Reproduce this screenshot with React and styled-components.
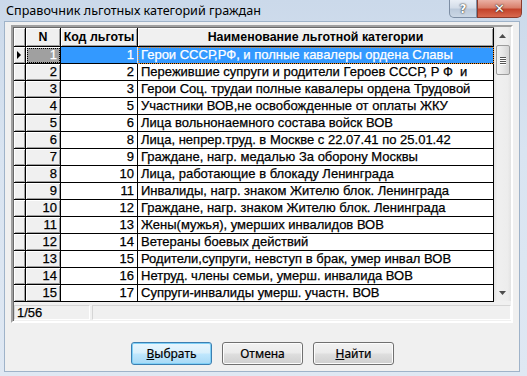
import styled, { createGlobalStyle } from "styled-components";

const GlobalStyle = createGlobalStyle`
  html, body { margin: 0; padding: 0; background: #d6e2ef; }
  body { width: 527px; height: 376px; overflow: hidden; }
`;

const rows = [
  [1, 1, "Герои СССР,РФ, и полные кавалеры ордена Славы"],
  [2, 2, "Пережившие супруги и родители Героев СССР, Р Ф  и"],
  [3, 3, "Герои Соц. трудаи полные кавалеры ордена Трудовой"],
  [4, 5, "Участники ВОВ,не освобожденные от оплаты ЖКУ"],
  [5, 6, "Лица вольнонаемного состава войск ВОВ"],
  [6, 8, "Лица, непрер.труд. в Москве с 22.07.41 по 25.01.42"],
  [7, 9, "Граждане, нагр. медалью За оборону Москвы"],
  [8, 10, "Лица, работающие в блокаду Ленинграда"],
  [9, 11, "Инвалиды, нагр. знаком Жителю блок. Ленинграда"],
  [10, 12, "Граждане, нагр. знаком Жителю блок. Ленинграда"],
  [11, 13, "Жены(мужья), умерших инвалидов ВОВ"],
  [12, 14, "Ветераны боевых действий"],
  [13, 15, "Родители,супруги, невступ в брак, умер инвал ВОВ"],
  [14, 16, "Нетруд. члены семьи, умерш. инвалида ВОВ"],
  [15, 17, "Супруги-инвалиды умерш. участн. ВОВ"],
];

const Window = styled.div`
  width: 527px;
  height: 376px;
  display: flex;
  flex-direction: column;
  background: linear-gradient(180deg, #cbd9ea 0%, #d9e4f1 40%, #dfe8f3 100%);
  box-sizing: border-box;
  padding: 0 7px 4px 4px;
`;

const TitleBar = styled.div`
  height: 21px;
  display: flex;
  align-items: flex-start;
  justify-content: space-between;
`;

const Title = styled.div`
  font-family: "Noto Sans", "Open Sans", sans-serif;
  font-size: 12.6px;
  color: #000;
  padding: 3px 0 0 2px;
  line-height: 16px;
`;

const Caption = styled.div`
  display: flex;
  margin-right: -2px;
`;

const CapButton = styled.div`
  height: 18px;
  width: ${(p) => p.$w}px;
  box-sizing: border-box;
  display: flex;
  align-items: center;
  justify-content: center;
  border: 1px solid ${(p) => (p.$close ? "#8a3a2c" : "#7d8ea4")};
  border-top: none;
  border-radius: ${(p) => (p.$close ? "0 0 5px 0" : "0 0 0 5px")};
  background: ${(p) =>
    p.$close
      ? "linear-gradient(180deg, #eab0a4 0%, #d9806c 45%, #c3432b 55%, #d8694f 100%)"
      : "linear-gradient(180deg, #e9eef5 0%, #d4dde9 45%, #bccadb 55%, #cbd7e5 100%)"};
  font-family: "DejaVu Sans", sans-serif;
  font-weight: bold;
  font-size: ${(p) => (p.$close ? 13 : 12)}px;
  color: #fff;
  text-shadow: 0 0 2px #333, 0 0 1px #222;
`;

const Client = styled.div`
  flex: 1;
  background: #f0f0f0;
  border: 1px solid #9fb3c9;
  display: flex;
  flex-direction: column;
  padding: 3px 6px 6px 6px;
`;

const GridFrame = styled.div`
  border-style: solid;
  border-width: 2px;
  border-color: #a0a0a0 #fff #fff #a0a0a0;
  box-shadow: inset 1px 1px 0 #696969;
  display: flex;
  flex-direction: column;
  background: #f0f0f0;
`;

const GridBody = styled.div`
  display: flex;
  padding: 1px 0 0 1px;
`;

const Table = styled.div`
  width: 480px;
  font-family: "Liberation Sans", Arial, sans-serif;
`;

const Row = styled.div`
  display: grid;
  grid-template-columns: 12px 35px 77px 356px;
  height: ${(p) => (p.$head ? 19 : 17)}px;
`;

const GrayCell = styled.div`
  background: ${(p) => (p.$current ? "#a0a0a0" : "#f0f0f0")};
  box-shadow: inset 1px 1px 0 #fff, inset -1px -1px 0 #a0a0a0;
  border-right: 1px solid #000;
  border-bottom: 1px solid #000;
  font-size: 13px;
  line-height: 16px;
  -webkit-text-stroke: 0.25px currentColor;
  text-align: right;
  padding-right: 3px;
  color: ${(p) => (p.$current ? "#fff" : "#000")};
  outline: ${(p) => (p.$current ? "1px dotted #000" : "none")};
  outline-offset: -2px;
  display: flex;
  align-items: center;
  justify-content: flex-end;
`;

const Indicator = styled(GrayCell)`
  padding: 0;
  justify-content: center;
`;

const HeadCell = styled.div`
  background: #f0f0f0;
  box-shadow: inset 1px 1px 0 #fff, inset -1px -1px 0 #a0a0a0;
  border-right: 1px solid #000;
  border-bottom: 1px solid #000;
  font-weight: bold;
  font-size: 12.4px;
  display: flex;
  align-items: center;
  justify-content: center;
  color: #000;
`;

const Cell = styled.div`
  background: ${(p) => (p.$sel ? "#3399ff" : "#fff")};
  color: ${(p) => (p.$sel ? "#fff" : "#000")};
  border-right: 1px solid ${(p) => (p.$sel && p.$num ? "#cfe4ff" : "#000")};
  border-bottom: 1px solid #000;
  font-size: 13px;
  line-height: 16px;
  -webkit-text-stroke: 0.25px currentColor;
  white-space: pre;
  overflow: hidden;
  text-align: ${(p) => (p.$num ? "right" : "left")};
  padding: ${(p) => (p.$num ? "0 3px 0 0" : "0 0 0 3px")};
  outline: ${(p) => (p.$focus ? "1px dotted #f08a24" : "none")};
  outline-offset: -1px;
`;

const Scrollbar = styled.div`
  width: 17px;
  height: 274px;
  margin-top: -1px;
  background: linear-gradient(90deg, #e3e3e3 0%, #f0f0f0 20%, #ededed 80%, #e3e3e3 100%);
  display: flex;
  flex-direction: column;
  align-items: center;
`;

const Arrow = styled.div`
  height: 17px;
  width: 17px;
  display: flex;
  align-items: center;
  justify-content: center;
`;

const Thumb = styled.div`
  width: 14px;
  height: 30px;
  margin-top: 1px;
  box-sizing: border-box;
  border: 1px solid #9c9c9c;
  border-radius: 2px;
  background: linear-gradient(90deg, #f3f3f3 0%, #e6e6e6 50%, #d4d4d4 100%);
  display: flex;
  flex-direction: column;
  align-items: center;
  justify-content: center;
  gap: 1px;
`;

const Grip = styled.div`
  width: 6px;
  height: 1px;
  background: #555;
  box-shadow: 0 1px 0 #fff;
`;

const Track = styled.div`
  flex: 1;
`;

const StatusStrip = styled.div`
  display: flex;
  gap: 2px;
  padding: 3px 0 1px 1px;
`;

const StatusBox = styled.div`
  width: ${(p) => p.$w}px;
  flex: ${(p) => (p.$w ? "none" : 1)};
  height: 15px;
  box-sizing: border-box;
  border: 1px solid #d5d5d5;
  border-right-color: #fff;
  border-bottom-color: #fff;
  background: #f0f0f0;
  font-family: "Liberation Sans", Arial, sans-serif;
  font-size: 13px;
  line-height: 14px;
  -webkit-text-stroke: 0.25px currentColor;
  padding-left: 2px;
`;

const Buttons = styled.div`
  flex: 1;
  display: flex;
  justify-content: center;
  align-items: flex-end;
  gap: 10px;
  padding-left: 1px;
`;

const Button = styled.div`
  width: 81px;
  height: 23px;
  box-sizing: border-box;
  border: 1px solid ${(p) => (p.$default ? "#3c7fb1" : "#707070")};
  border-radius: 3px;
  background: ${(p) =>
    p.$default
      ? "linear-gradient(180deg, #eaf6fd 0%, #d9f0fc 45%, #bee6fd 55%, #a7d9f5 100%)"
      : "linear-gradient(180deg, #f2f2f2 0%, #ebebeb 45%, #dddddd 55%, #cfcfcf 100%)"};
  box-shadow: inset 0 0 0 1px ${(p) => (p.$default ? "#7fd0f7" : "#fcfcfc")};
  font-family: "Noto Sans", "Open Sans", sans-serif;
  font-size: 12px;
  -webkit-text-stroke: 0.2px currentColor;
  color: #000;
  display: flex;
  align-items: center;
  justify-content: center;
  line-height: 16px;
`;

const Key = styled.span`
  text-decoration: underline;
`;

export default function App() {
  return (
    <>
      <GlobalStyle />
      <Window>
        <TitleBar>
          <Title>Справочник льготных категорий граждан</Title>
          <Caption>
            <CapButton $w={28}>?</CapButton>
            <CapButton $w={45} $close>
              ✕
            </CapButton>
          </Caption>
        </TitleBar>
        <Client>
          <GridFrame>
            <GridBody>
              <Table>
                <Row $head>
                  <HeadCell />
                  <HeadCell>N</HeadCell>
                  <HeadCell>Код льготы</HeadCell>
                  <HeadCell>Наименование льготной категории</HeadCell>
                </Row>
                {rows.map(([n, code, name], i) => (
                  <Row key={n}>
                    <Indicator>
                      {i === 0 && (
                        <svg width="5" height="8" viewBox="0 0 5 8">
                          <path d="M0 0 L4 4 L0 8 Z" fill="#000" />
                        </svg>
                      )}
                    </Indicator>
                    <GrayCell $current={i === 0}>{n}</GrayCell>
                    <Cell $num $sel={i === 0}>
                      {code}
                    </Cell>
                    <Cell $sel={i === 0} $focus={i === 0}>
                      {name}
                    </Cell>
                  </Row>
                ))}
              </Table>
              <Scrollbar>
                <Arrow>
                  <svg width="7" height="4" viewBox="0 0 7 4">
                    <path d="M0 4 L3.5 0 L7 4 Z" fill="#4d4d4d" />
                  </svg>
                </Arrow>
                <Thumb>
                  <Grip />
                  <Grip />
                  <Grip />
                  <Grip />
                </Thumb>
                <Track />
                <Arrow>
                  <svg width="7" height="4" viewBox="0 0 7 4">
                    <path d="M0 0 L3.5 4 L7 0 Z" fill="#4d4d4d" />
                  </svg>
                </Arrow>
              </Scrollbar>
            </GridBody>
            <StatusStrip>
              <StatusBox $w={76}>1/56</StatusBox>
              <StatusBox />
            </StatusStrip>
          </GridFrame>
          <Buttons>
            <Button $default>
              <span>
                <Key>В</Key>ыбрать
              </span>
            </Button>
            <Button>Отмена</Button>
            <Button>
              <span>
                <Key>Н</Key>айти
              </span>
            </Button>
          </Buttons>
        </Client>
      </Window>
    </>
  );
}
